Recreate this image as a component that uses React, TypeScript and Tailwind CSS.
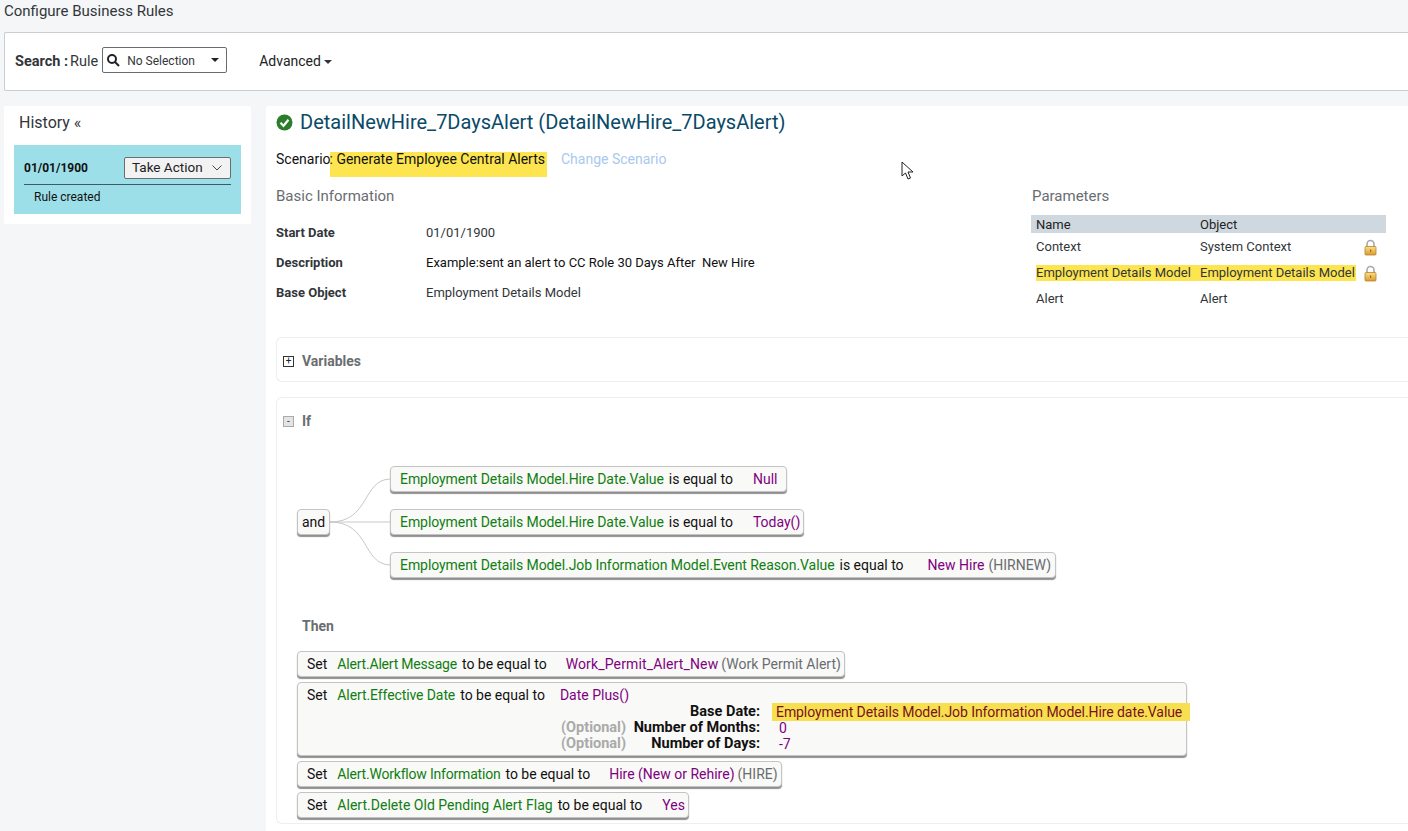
import { ReactNode } from 'react'

const green = 'text-[#107e10]'
const purple = 'text-[#800080]'

function Lock() {
    return (
        <svg width="13" height="17" viewBox="0 0 13 17">
            <defs>
                <linearGradient id="lockBody" x1="0" y1="0" x2="0" y2="1">
                    <stop offset="0" stopColor="#fbe08a" />
                    <stop offset="1" stopColor="#d99a2b" />
                </linearGradient>
            </defs>
            <path d="M3 8V5a3.5 3.5 0 0 1 7 0v3" fill="none" stroke="#a8a8a8" strokeWidth="1.6" />
            <rect x="1" y="7.5" width="11" height="8.5" rx="1" fill="url(#lockBody)" stroke="#b9822a" strokeWidth="0.8" />
            <rect x="6" y="10.5" width="1.2" height="2.5" fill="#a06a18" />
        </svg>
    )
}

function Node({ className, children }: { className?: string, children: ReactNode }) {
    return (
        <div className={`flex rounded-[4px] border border-[#c4c4c4] bg-[#f9f9f8] text-[14px] text-[#111] shadow-[0_2px_1px_#8f8f8f] ${className ?? ''}`}>
            {children}
        </div>
    )
}

function Condition({ field, value, suffix, gap, pad }: { field: string, value: string, suffix?: string, gap: string, pad: string }) {
    return (
        <Node className={`h-[26px] w-fit items-center whitespace-nowrap pl-[9px] ${pad}`}>
            <span className={`tracking-[-0.07px] ${green}`}>{field}</span>
            <span className="ml-[5px]">is equal to</span>
            <span className={`${purple} ${gap}`}>{value}</span>
            {suffix && <span className="ml-[4px] text-[#6a6d70]">{suffix}</span>}
        </Node>
    )
}

function SetRow({ field, tracking, value, suffix, gap }: { field: string, tracking: string, value: string, suffix?: string, gap: string }) {
    return (
        <Node className="h-[26px] w-fit items-center whitespace-nowrap pl-[9px] pr-[3px]">
            <span>Set</span>
            <span className={`ml-[10px] ${tracking} ${green}`}>{field}</span>
            <span className="ml-[5px]">to be equal to</span>
            <span className={`${purple} ${gap}`}>{value}</span>
            {suffix && <span className="ml-[3px] text-[#6a6d70]">{suffix}</span>}
        </Node>
    )
}

function InfoRow({ label, value, dark }: { label: string, value: string, dark?: boolean }) {
    return (
        <div className="flex h-[30px] items-center text-[13px]">
            <span className="w-[150px] font-bold text-[#32363a]">{label}</span>
            <span className={`whitespace-pre ${dark ? 'text-[#111]' : 'text-[#32363a]'}`}>{value}</span>
        </div>
    )
}

function ParamRow({ name, object, locked, mark }: { name: string, object: string, locked?: boolean, mark?: boolean }) {
    return (
        <div className="flex h-[26px] items-center whitespace-nowrap text-[13px] text-[#32363a]">
            <div className={`ml-[5px] flex h-[16px] w-[320px] items-center ${mark ? 'bg-[#fde54f]' : ''}`}>
                <span className="w-[164px]">{name}</span>
                <span>{object}</span>
            </div>
            <span className="ml-[8px] flex w-[13px]">{locked && <Lock />}</span>
        </div>
    )
}

export default function App() {
    return (
        <div className="relative h-[831px] w-[1408px] overflow-hidden bg-[#f4f6f7] font-['Roboto',sans-serif] text-[#32363a]">
            <div className="flex h-[32px] items-start pl-[4px] pt-[1px] text-[15px] leading-[20px]">Configure Business Rules</div>

            <div className="ml-[4px] flex h-[59px] items-center rounded-l-[2px] border border-r-0 border-[#c8ced3] bg-white pl-[10px] text-[14.5px]">
                <span className="font-bold">Search :</span>
                <span className="ml-[2px]">Rule</span>
                <div className="mb-[4px] ml-[4px] flex h-[26px] w-[125px] items-center rounded-[2px] border border-[#6a6d70] pl-[3px] pr-[7px]">
                    <svg width="14" height="14" viewBox="0 0 14 14" fill="none" stroke="#222" strokeWidth="2">
                        <circle cx="6" cy="6" r="4" />
                        <path d="M9 9l4 4" />
                    </svg>
                    <span className="ml-[7px] flex-1 pt-[2px] text-[12px]">No Selection</span>
                    <span className="h-0 w-0 border-x-[4px] border-t-[4px] border-x-transparent border-t-[#222]" />
                </div>
                <span className="ml-[32px] text-[14px] text-[#222]">Advanced</span>
                <span className="ml-[3px] h-0 w-0 border-x-[4px] border-t-[4px] border-x-transparent border-t-[#32363a]" />
            </div>

            <div className="mt-[15px] flex items-start gap-[15px] pl-[4px]">
                <aside className="h-[118px] w-[247px] rounded-[2px] bg-white px-[10px]">
                    <div className="flex h-[39px] items-start pl-[5px] pt-[7px] text-[16px] leading-[20px]">History «</div>
                    <div className="h-[69px] bg-[#9ddfe9] px-[10px] pt-[11px]">
                        <div className="flex h-[28px] items-center justify-between pb-[5px]">
                            <span className="text-[12px] font-bold text-[#111]">01/01/1900</span>
                            <span className="flex h-[22px] w-[107px] items-center justify-between rounded-[2px] border border-[#6a6d70] bg-[#f2f2f2] pl-[7px] pr-[8px] text-[13.5px] text-[#222]">
                                Take Action
                                <svg width="10" height="6" viewBox="0 0 10 6" fill="none" stroke="#444" strokeWidth="1"><path d="M0.5 0.5l4.5 4.5 4.5-4.5" /></svg>
                            </span>
                        </div>
                        <div className="border-t border-[#3f5a66] pl-[10px] pt-[4px] text-[12px] leading-[16px] text-[#111]">Rule created</div>
                    </div>
                </aside>

                <main className="h-[725px] flex-1 rounded-tl-[2px] bg-white pl-[10px]">
                    <div className="flex h-[33px] items-center">
                        <svg width="17" height="17" viewBox="0 0 17 17">
                            <circle cx="8.5" cy="8.5" r="8" fill="#2b7d2b" />
                            <path d="M4.5 8.8l3 3 5-6" fill="none" stroke="#fff" strokeWidth="2.2" />
                        </svg>
                        <h1 className="ml-[7px] pb-[2px] text-[20px] text-[#0a4a68]">DetailNewHire_7DaysAlert (DetailNewHire_7DaysAlert)</h1>
                    </div>

                    <div className="mt-[13px] flex h-[25px] items-start text-[14px] leading-[15px] text-[#111]">
                        <span className="-mr-[1px]">Scenario</span>
                        <span className="h-[25px] bg-[#fde54f] pr-[2px]">: Generate Employee Central Alerts</span>
                        <span className="ml-[14px] text-[#a9c9ee]">Change Scenario</span>
                    </div>

                    <div className="mt-[7px] flex h-[133px] items-start">
                        <section className="w-[755px]">
                            <h2 className="flex h-[24px] items-center text-[15px] text-[#6a6d70]">Basic Information</h2>
                            <div className="mt-[10px]">
                                <InfoRow label="Start Date" value="01/01/1900" />
                                <InfoRow label="Description" value="Example:sent an alert to CC Role 30 Days After  New Hire" dark />
                                <InfoRow label="Base Object" value="Employment Details Model" />
                            </div>
                        </section>
                        <section className="w-[355px]">
                            <h2 className="flex h-[24px] items-center pl-[1px] text-[15px] text-[#6a6d70]">Parameters</h2>
                            <div className="mb-[1px] mt-[7px] flex h-[18px] items-center bg-[#d0d8df] pl-[5px] pt-[1px] text-[13px] text-[#222]">
                                <span className="w-[164px]">Name</span>
                                <span>Object</span>
                            </div>
                            <ParamRow name="Context" object="System Context" locked />
                            <ParamRow name="Employment Details Model" object="Employment Details Model" locked mark />
                            <ParamRow name="Alert" object="Alert" />
                        </section>
                    </div>

                    <div className="mt-[20px] flex h-[45px] items-center rounded-l-[6px] border border-r-0 border-[#eeeeee] pl-[6px] pt-[3px]">
                        <span className="flex h-[11px] w-[11px] items-center justify-center border border-[#333] text-[10px] leading-none text-[#222]">+</span>
                        <span className="ml-[8px] text-[14px] font-bold text-[#6a6d70]">Variables</span>
                    </div>

                    <div className="mt-[15px] h-[427px] rounded-l-[6px] border border-r-0 border-[#eeeeee]">
                        <div className="flex h-[47px] items-center pl-[6px]">
                            <span className="flex h-[11px] w-[11px] items-center justify-center border border-[#aaa] bg-[#e4e4e4] text-[10px] leading-none text-[#333]">-</span>
                            <span className="ml-[8px] text-[14px] font-bold text-[#6a6d70]">If</span>
                        </div>

                        <div className="relative mt-[21px] flex h-[112px] items-center pl-[20px]">
                            <svg className="absolute left-[53px] top-0" width="62" height="112" viewBox="0 0 62 112" fill="none" stroke="#c8c8c8">
                                <path d="M0 56C40 56 32 14 60 13" />
                                <path d="M0 56H60" />
                                <path d="M0 56C40 56 32 98 60 99" />
                            </svg>
                            <Node className="relative h-[26px] w-[33px] items-center justify-center">and</Node>
                            <div className="relative ml-[60px] flex flex-col gap-[17px]">
                                <Condition field="Employment Details Model.Hire Date.Value" value="Null" gap="ml-[20px]" pad="pr-[9px]" />
                                <Condition field="Employment Details Model.Hire Date.Value" value="Today()" gap="ml-[20px]" pad="pr-[3px]" />
                                <Condition field="Employment Details Model.Job Information Model.Event Reason.Value" value="New Hire" suffix="(HIRNEW)" gap="ml-[24px]" pad="pr-[4px]" />
                            </div>
                        </div>

                        <div className="mt-[38px] pl-[25px] text-[14px] font-bold leading-[20px] text-[#6a6d70]">Then</div>

                        <div className="mt-[15px] flex flex-col gap-[5px] pl-[20px]">
                            <SetRow field="Alert.Alert Message" tracking="tracking-[-0.2px]" value="Work_Permit_Alert_New" suffix="(Work Permit Alert)" gap="ml-[19px] tracking-[0.14px]" />
                            <Node className="h-[74px] w-[890px] flex-col whitespace-nowrap pl-[9px] pt-[4px]">
                                <div className="flex h-[17px] items-center pb-[1px]">
                                    <span>Set</span>
                                    <span className={`ml-[10px] tracking-[-0.1px] ${green}`}>Alert.Effective Date</span>
                                    <span className="ml-[5px]">to be equal to</span>
                                    <span className={`ml-[15px] ${purple}`}>Date Plus()</span>
                                </div>
                                <div className="ml-[254px] grid grid-cols-[199px_auto] leading-[16px]">
                                    <span className="text-right text-[14.5px] font-bold">Base Date:</span>
                                    <span className="-my-[1px] ml-[12px] w-[418px] bg-[#f7e04f] py-[1px] pl-[4px] tracking-[-0.08px] text-[#7a1020]">Employment Details Model.Job Information Model.Hire date.Value</span>
                                    <span className="flex justify-between text-[14.5px] font-bold"><span className="text-[#aaa]">(Optional)</span> Number of Months:</span>
                                    <span className={`ml-[19px] ${purple}`}>0</span>
                                    <span className="flex justify-between text-[14.5px] font-bold"><span className="text-[#aaa]">(Optional)</span> Number of Days:</span>
                                    <span className={`ml-[19px] ${purple}`}>-7</span>
                                </div>
                            </Node>
                            <SetRow field="Alert.Workflow Information" tracking="tracking-[-0.2px]" value="Hire (New or Rehire)" suffix="(HIRE)" gap="ml-[19px]" />
                            <SetRow field="Alert.Delete Old Pending Alert Flag" tracking="tracking-[0.02px]" value="Yes" gap="ml-[20px]" />
                        </div>
                    </div>
                </main>
            </div>

            <svg className="absolute left-[901px] top-[161px]" width="14" height="20" viewBox="0 0 14 20" fill="#fff" stroke="#222" strokeWidth="1">
                <path d="M1 1v14l3.5-3 2.5 6 2.5-1-2.5-6h5z" />
            </svg>
        </div>
    )
}
